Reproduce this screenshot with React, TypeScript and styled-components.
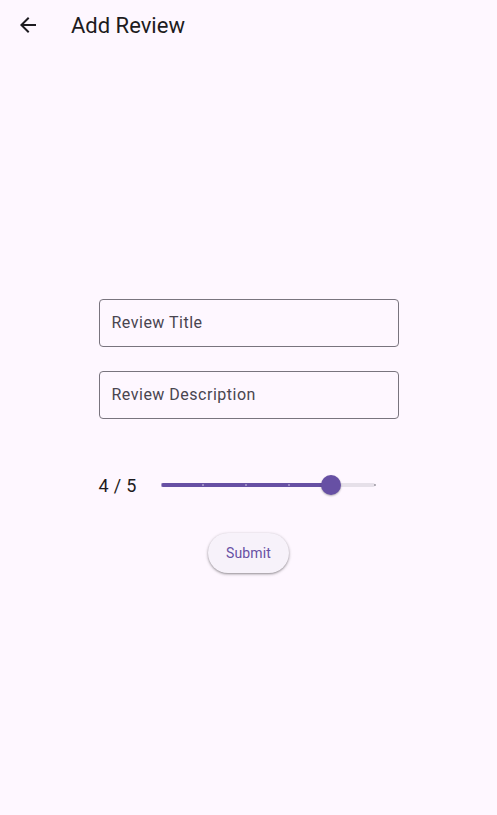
import React, { useState } from "react";
import styled, { createGlobalStyle } from "styled-components";

const GlobalStyle = createGlobalStyle`
  html, body {
    margin: 0;
    padding: 0;
    background: #fef7ff;
    font-family: Roboto, "Noto Sans", sans-serif;
  }
  * { box-sizing: border-box; }
`;

const Page = styled.div`
  display: flex;
  flex-direction: column;
  height: 815px;
  background: #fef7ff;
  color: #1d1b20;
`;

const AppBar = styled.header`
  display: flex;
  align-items: center;
  height: 50px;
  flex-shrink: 0;
`;

const Leading = styled.button`
  display: flex;
  align-items: center;
  justify-content: center;
  width: 55px;
  height: 50px;
  padding: 0;
  border: none;
  background: none;
  color: #1d1b20;
  cursor: pointer;
`;

const Title = styled.h1`
  margin: 2px 0 0 16px;
  font-size: 22px;
  font-weight: 400;
  line-height: 28px;
`;

const Body = styled.main`
  flex: 1;
  display: flex;
  flex-direction: column;
  align-items: center;
  justify-content: center;
  padding-top: 7px;
`;

const Form = styled.div`
  width: 300px;
  display: flex;
  flex-direction: column;
`;

const Field = styled.input<{ $gapTop?: number }>`
  width: 100%;
  height: 48px;
  margin-top: ${(p) => p.$gapTop ?? 0}px;
  padding: 0 12px 2px;
  border: 1px solid #79747e;
  border-radius: 4px;
  background: transparent;
  font-family: inherit;
  font-size: 16px;
  letter-spacing: 0.5px;
  color: #1d1b20;
  outline: none;
  &::placeholder { color: #49454f; }
`;

const SliderRow = styled.div`
  display: flex;
  align-items: center;
  height: 48px;
  margin-top: 42px;
`;

const RatingLabel = styled.span`
  width: 38px;
  font-size: 18px;
  letter-spacing: 0.3px;
  color: #1d1b20;
  white-space: nowrap;
`;

const Track = styled.div`
  position: relative;
  flex: 1;
  height: 4px;
  margin: 0 24px;
  border-radius: 2px;
  background: #e6e0e9;
`;

const ActiveTrack = styled.div`
  position: absolute;
  left: 0;
  top: 0;
  bottom: 0;
  border-radius: 2px;
  background: #6750a4;
`;

const Tick = styled.span<{ $active: boolean }>`
  position: absolute;
  top: 1px;
  width: 2px;
  height: 2px;
  margin-left: -1px;
  border-radius: 50%;
  background: ${(p) => (p.$active ? "rgba(255,255,255,0.45)" : "rgba(73,69,79,0.5)")};
`;

const Thumb = styled.span`
  position: absolute;
  top: 50%;
  width: 20px;
  height: 20px;
  margin: -10px 0 0 -10.5px;
  border-radius: 50%;
  background: #6750a4;
  box-shadow: 0 1px 2px rgba(0, 0, 0, 0.3);
`;

const ButtonRow = styled.div`
  display: flex;
  justify-content: center;
  margin-top: 24px;
`;

const ElevatedButton = styled.button`
  height: 40px;
  padding: 0 18px;
  border: none;
  border-radius: 20px;
  background: #f7f2fa;
  color: #6750a4;
  font-family: inherit;
  font-size: 14px;
  font-weight: 400;
  letter-spacing: 0.1px;
  box-shadow: 0 1px 2px rgba(0, 0, 0, 0.3), 0 1px 3px 1px rgba(0, 0, 0, 0.12);
  cursor: pointer;
`;

const BackIcon = () => (
  <svg width="24" height="24" viewBox="0 0 24 24" fill="currentColor">
    <path d="M20 11H7.83l5.59-5.59L12 4l-8 8 8 8 1.41-1.41L7.83 13H20v-2z" />
  </svg>
);

const MAX = 5;

export default function App() {
  const [rating] = useState(4);
  const pct = (rating / MAX) * 100;

  return (
    <>
      <GlobalStyle />
      <Page>
        <AppBar>
          <Leading aria-label="Back">
            <BackIcon />
          </Leading>
          <Title>Add Review</Title>
        </AppBar>
        <Body>
          <Form>
            <Field placeholder="Review Title" />
            <Field placeholder="Review Description" $gapTop={24} />
            <SliderRow>
              <RatingLabel>
                {rating} / {MAX}
              </RatingLabel>
              <Track>
                <ActiveTrack style={{ width: `${pct}%` }} />
                {Array.from({ length: MAX + 1 }, (_, i) => (
                  <Tick
                    key={i}
                    $active={i <= rating}
                    style={{ left: `${(i / MAX) * 100}%` }}
                  />
                ))}
                <Thumb style={{ left: `${pct}%` }} />
              </Track>
            </SliderRow>
            <ButtonRow>
              <ElevatedButton>Submit</ElevatedButton>
            </ButtonRow>
          </Form>
        </Body>
      </Page>
    </>
  );
}
